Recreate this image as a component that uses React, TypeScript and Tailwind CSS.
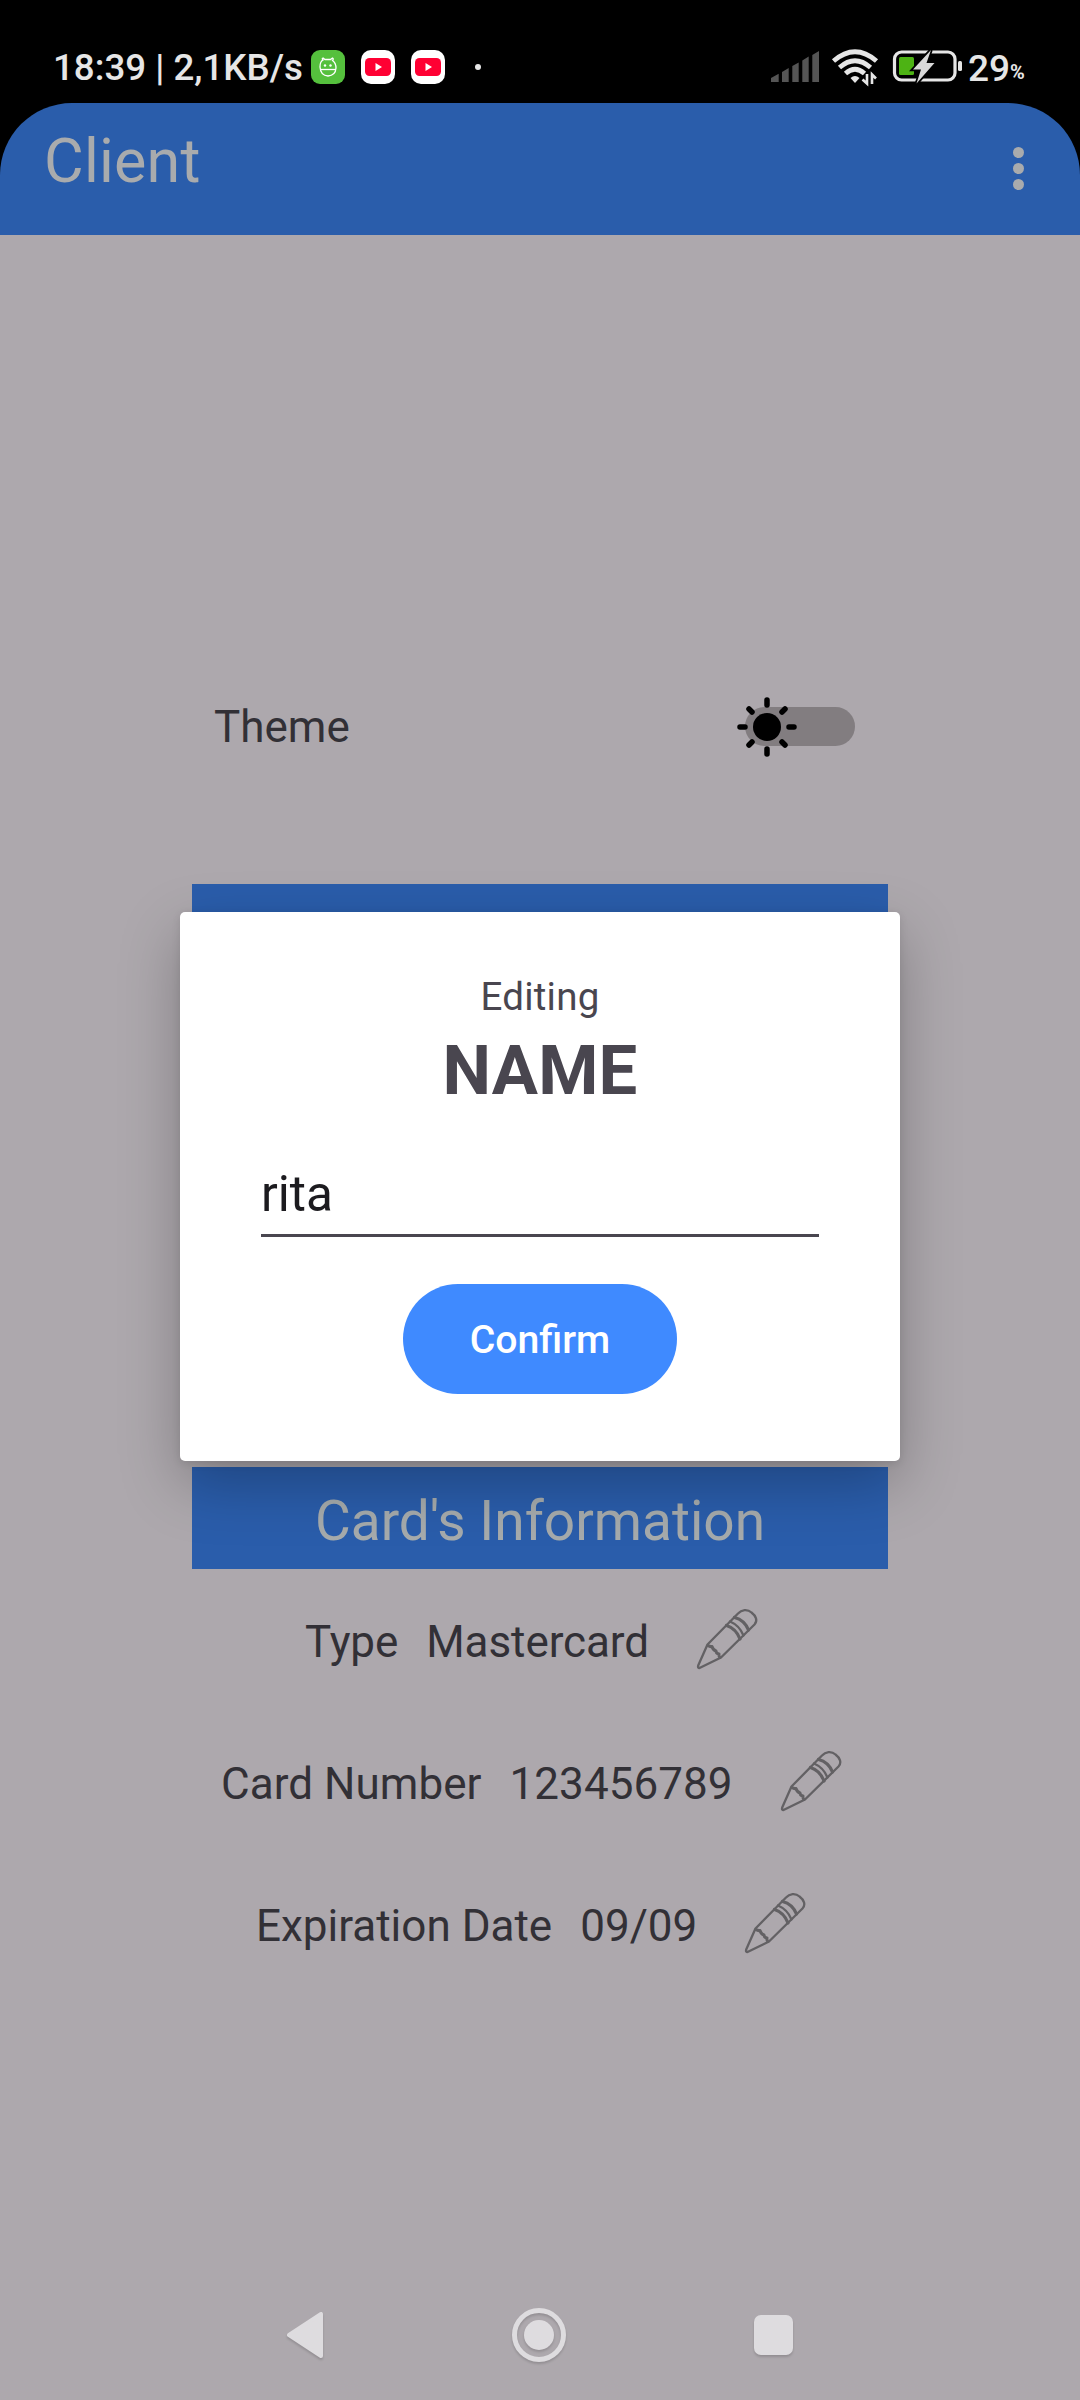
import React from "react";

const Pencil = () => (
  <svg className="h-[62px] w-[62px] overflow-visible" viewBox="0 0 62 62" fill="none" stroke="#636164" strokeWidth="2.300" strokeLinejoin="round" strokeLinecap="round">
    <path d="M2.500 60 Q0.500 60 1.200 57.500 L10.500 36.500 L41 5.500 C44.500 1.500 50.500 0.800 54.500 4.500 C59 8 61 12.500 57.500 16.500 L24 49.500 Z" />
    <path d="M11 37.500 Q13 39 15 38.500 Q16 42 19 43 Q19 45.500 22 46 Q21.500 48 22.800 49.500" strokeWidth="3" />
    <path d="M29.500 17.500 Q39 20.500 43 31" strokeWidth="3.200" />
    <path d="M33 13.500 Q42.500 17.500 46.500 27.500" />
    <path d="M37.500 9.500 Q47.500 12 51.500 22" strokeWidth="3.200" />
  </svg>
);

const YouTube = () => (
  <span className="flex h-[34px] w-[34px] items-center justify-center rounded-[10px] bg-white">
    <svg className="h-[18px] w-[26px]" viewBox="0 0 26 18">
      <rect width="26" height="18" rx="4.500" fill="#ff0033" />
      <path d="M10.500 5 L17 9 L10.500 13 Z" fill="#fff" />
    </svg>
  </span>
);

const StatusIcons = () => (
  <svg className="h-[48px] w-[203px]" viewBox="765 44 203 48">
    <path d="M771 82 V78 L778.700 73.700 V82 Z M782 82 V72 L788.700 68 V82 Z M792.300 82 V66 L798.700 62.500 V82 Z M802.300 82 V60.500 L808.700 56.500 V82 Z M812.300 82 V55 L819 51 V82 Z" fill="#555" />
    <g fill="none" stroke="#e6e6e6" strokeWidth="4.800">
      <path d="M833.500 61 Q855 42.500 876.500 61" />
      <path d="M839.500 67.500 Q855 54 870.500 67.500" />
      <path d="M845.500 73.500 Q855 65 864.500 73.500" />
    </g>
    <path d="M850.500 78 Q855 74 859.500 78 L855 83 Z" fill="#e6e6e6" />
    <path d="M867 74 V83.500 L862.500 79.500 M872 84 V74.500 L876 78.500" fill="none" stroke="#e6e6e6" strokeWidth="2.600" />
    <rect x="894.500" y="52" width="60.500" height="28" rx="7" fill="none" stroke="#e6e6e6" strokeWidth="3.200" />
    <rect x="958" y="61" width="4" height="10" rx="1.500" fill="#e6e6e6" />
    <rect x="899" y="57" width="15" height="18" rx="1.500" fill="#4db314" />
    <path d="M931 50 L913 69.500 H921 L916.500 83.500 L934.500 63 H926.500 Z" fill="#d8d8d8" stroke="#000" strokeWidth="3.500" paintOrder="stroke" />
  </svg>
);

const StatusBar = () => (
  <div className="flex h-[103px] items-start justify-between bg-black text-[#e6e6e6]">
    <div className="flex h-[84px] items-center pt-[49px] pl-[53px]">
      <span className="w-[258px] pt-[3px] text-[36.700px] leading-[40px] font-medium whitespace-nowrap">18:39 | 2,1KB/s</span>
      <svg className="mr-4 h-[34px] w-[34px]" viewBox="0 0 34 34">
        <rect width="34" height="34" rx="9" fill="#55c03d" />
        <g fill="none" stroke="#fff" strokeWidth="1.300">
          <path d="M9 17 Q9 11.500 12 10 Q10.500 8.500 12 8 L14 9.500 H19.500 L21.500 8 Q23 8.500 21.500 10.500 Q25 13 25 18 Q24.500 25.500 17 26 Q9.500 25.500 9 17 Z" />
          <path d="M9 19.500 H25" />
        </g>
        <circle cx="14" cy="15.500" r="1.200" fill="#fff" />
        <circle cx="19.500" cy="15.500" r="1.200" fill="#fff" />
      </svg>
      <YouTube />
      <span className="w-4" />
      <YouTube />
      <span className="ml-[30px] h-[6px] w-[6px] rounded-full bg-[#e6e6e6]" />
    </div>
    <div className="flex h-[92px] items-start pt-[44px] pr-[56px]">
      <StatusIcons />
      <span className="pt-[5px] text-[37px] leading-[40px] font-medium">29</span>
      <span className="w-[14px] pt-[8px] text-[20px] leading-[40px] font-bold">%</span>
    </div>
  </div>
);

const Row = ({ label, value, className }: { label: string; value: string; className: string }) => (
  <div className={`flex h-[142px] items-start text-[44px] leading-[60px] text-[#323036] ${className}`}>
    <span className="mr-[28px] pt-[43px]">{label}</span>
    <span className="mr-[48px] pt-[43px]">{value}</span>
    <span className="pt-[39px]"><Pencil /></span>
  </div>
);

export default function App() {
  return (
    <div className="relative flex h-[2400px] w-[1080px] flex-col overflow-hidden bg-[#ada8ad] font-['Roboto',sans-serif]">
      <StatusBar />
      <div className="bg-black">
        <header className="flex h-[132px] items-start justify-between rounded-t-[72px] bg-[#2a5dab] pr-[56px] pl-[44px]">
          <h1 className="pt-[22px] text-[61px] leading-[72px] tracking-[0.2px] text-[#a9abad]">Client</h1>
          <div className="flex flex-col gap-[5px] pt-[44px]">
            <span className="h-[11px] w-[11px] rounded-full bg-[#a9abad]" />
            <span className="h-[11px] w-[11px] rounded-full bg-[#a9abad]" />
            <span className="h-[11px] w-[11px] rounded-full bg-[#a9abad]" />
          </div>
        </header>
      </div>
      <main className="mx-auto flex w-[696px] flex-col pt-[450px]">
        <div className="flex h-[199px] items-start justify-between pr-[33px] pl-[22px]">
          <span className="pt-[12px] text-[44px] leading-[60px] text-[#323036]">Theme</span>
          <svg className="mt-[11px] h-[62px] w-[118px]" viewBox="0 0 118 62">
            <rect x="8" y="11" width="110" height="39" rx="19.500" fill="#827d80" />
            <circle cx="30" cy="31" r="14" />
            <path d="M30 4 V9 M30 53 V58 M3 31 H8 M52 31 H57 M12 13 L15 16 M45 16 L48 13 M12 49 L15 46 M45 46 L48 49" stroke="#000" strokeWidth="5.500" strokeLinecap="round" />
          </svg>
        </div>
        <div className="h-[102px] bg-[#2a5dab]" />
        <div className="h-[481px]" />
        <h2 className="h-[102px] bg-[#2a5dab] pt-[18px] text-center text-[55px] leading-[72px] text-[#a6abac]">Card's Information</h2>
        <Row label="Type" value="Mastercard" className="pl-[113px] tracking-[-0.08px]" />
        <Row label="Card Number" value="123456789" className="pl-[29px] tracking-[0.05px]" />
        <Row label="Expiration Date" value="09/09" className="pl-[64px]" />
      </main>
      <nav className="mt-auto flex h-[130px] items-center justify-between px-[287px] drop-shadow-[0_2px_1px_rgba(0,0,0,0.15)]">
        <svg className="h-[46px] w-[36px]" viewBox="0 0 36 46">
          <path d="M2 23 L34 2 V44 Z" fill="#dedcdf" stroke="#dedcdf" strokeWidth="4" strokeLinejoin="round" />
        </svg>
        <span className="flex h-[54px] w-[54px] items-center justify-center rounded-full border-[5px] border-[#dedcdf]">
          <span className="h-[30px] w-[30px] rounded-full bg-[#dedcdf]" />
        </span>
        <span className="h-[40px] w-[39px] rounded-[7px] bg-[#dedcdf]" />
      </nav>
      <div className="absolute top-[912px] left-[180px] flex h-[549px] w-[720px] flex-col items-center rounded-[5px] bg-white pt-[60px] text-[#49464f] shadow-[0_22px_60px_rgba(0,0,0,0.26),0_2px_8px_rgba(0,0,0,0.1)]">
        <span className="text-[38.500px] leading-[50px] tracking-[0.25px]">Editing</span>
        <h3 className="pt-[3px] text-[68.750px] leading-[92px] font-bold tracking-[0.2px]">NAME</h3>
        <input defaultValue="rita" className="mt-[37px] h-[83px] w-[558px] border-b-[3px] border-[#49464f] text-[49.500px] text-[#1c1b1f] outline-none" />
        <button className="mt-[47px] h-[110px] w-[274px] rounded-full bg-[#3f8aff] pt-[3px] text-[39.200px] font-medium text-white">Confirm</button>
      </div>
    </div>
  );
}
